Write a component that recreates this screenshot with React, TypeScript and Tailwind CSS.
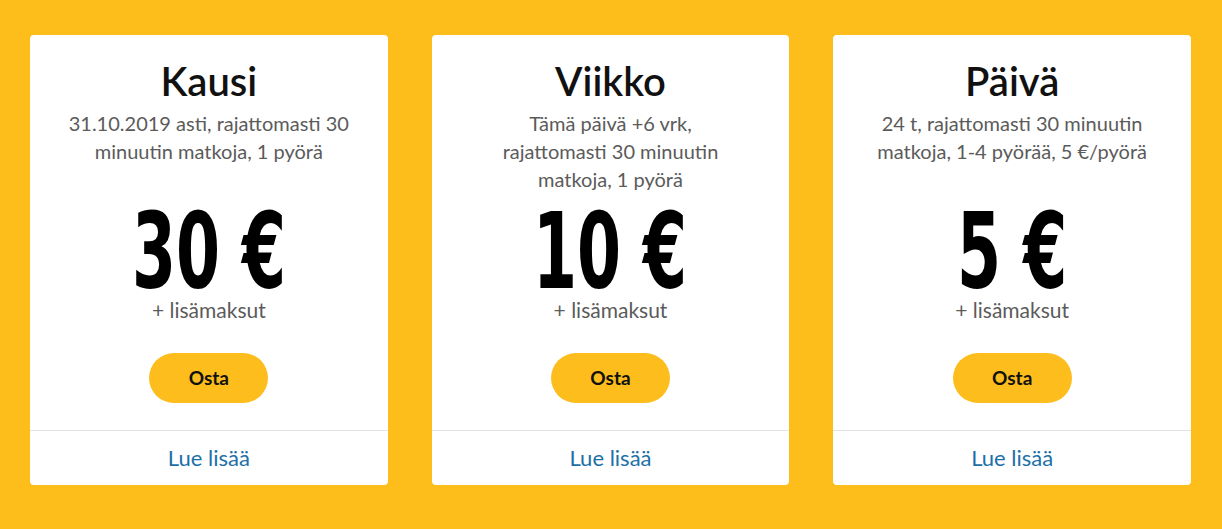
import React from 'react';

type Plan = {
  title: string;
  lines: string[];
  price: string;
};

const plans: Plan[] = [
  { title: 'Kausi', lines: ['31.10.2019 asti, rajattomasti 30', 'minuutin matkoja, 1 pyörä'], price: '30 €' },
  { title: 'Viikko', lines: ['Tämä päivä +6 vrk,', 'rajattomasti 30 minuutin', 'matkoja, 1 pyörä'], price: '10 €' },
  { title: 'Päivä', lines: ['24 t, rajattomasti 30 minuutin', 'matkoja, 1-4 pyörää, 5 €/pyörä'], price: '5 €' },
];

const PlanCard = ({ plan }: { plan: Plan }) => {
  return (
    <div className="flex flex-col bg-white rounded-[4px] h-[450px] overflow-hidden">
      <div className="flex flex-col items-center text-center pt-[24px] flex-1">
        <h2 className="text-[40px] leading-[44px] font-semibold text-[#111]">{plan.title}</h2>
        <p className="mt-[6px] h-[84px] text-[20px] leading-[28px] text-[#5b5b5b]">
          {plan.lines.map((l, i) => (
            <span key={i} className="block">{l}</span>
          ))}
        </p>
        <div
          className="mt-[11px] h-[96px] text-[105px] leading-[96px] font-bold text-black whitespace-nowrap inline-block scale-x-[0.67]"
          style={{ fontFamily: '"DejaVu Sans Condensed", "DejaVu Sans", sans-serif' }}
        >
          {plan.price}
        </div>
        <div className="-mt-[2px] text-[21px] leading-[24px] text-[#5b5b5b]">+ lisämaksut</div>
        <button className="mt-[31px] w-[119px] h-[50px] rounded-full bg-[#fdbd1c] text-[19px] font-bold text-[#111]">
          Osta
        </button>
      </div>
      <div className="border-t border-[#e3e3e3] h-[55px] flex items-center justify-center">
        <a href="#" className="text-[22px] text-[#1d70a8] pb-[2px]">Lue lisää</a>
      </div>
    </div>
  );
};

const App = () => {
  return (
    <div
      className="w-[1222px] h-[529px] bg-[#fdbe1c] px-[30px] pt-[35px]"
      style={{ fontFamily: 'Lato, "Open Sans", sans-serif' }}
    >
      <div className="grid grid-cols-3 gap-x-[44px] w-[1161px]">
        {plans.map((p) => (
          <PlanCard key={p.title} plan={p} />
        ))}
      </div>
    </div>
  );
};

export default App;
